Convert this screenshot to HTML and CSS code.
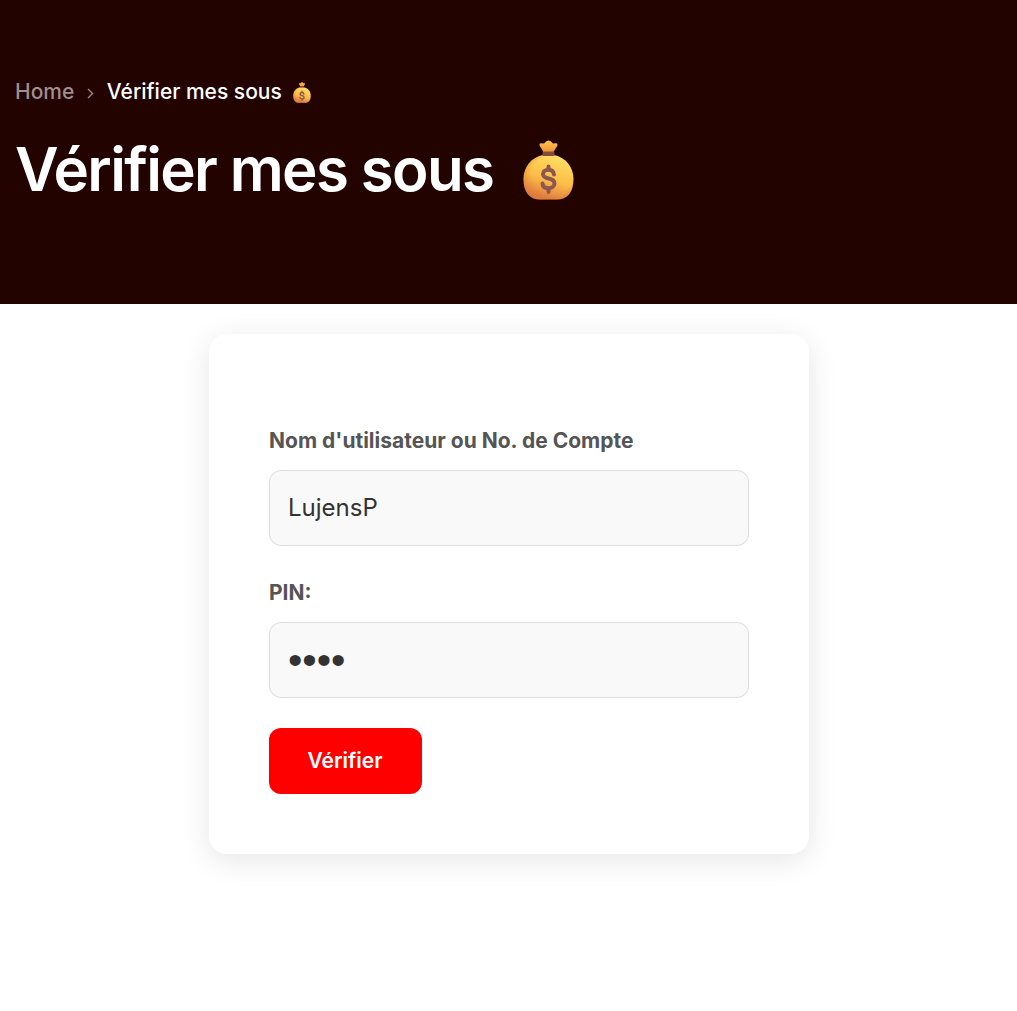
FILE: index.html
```html
<!DOCTYPE html>
<html lang="fr">
<head>
<meta charset="utf-8">
<title>Vérifier mes sous</title>
<link rel="stylesheet" href="styles.css">
</head>
<body>
<svg class="defs" width="0" height="0" aria-hidden="true">
  <defs>
    <linearGradient id="gold" x1="0.8" y1="0.1" x2="0.5" y2="1">
      <stop offset="0" stop-color="#ffdc60"/>
      <stop offset="0.55" stop-color="#fcbd48"/>
      <stop offset="1" stop-color="#e27c40"/>
    </linearGradient>
    <radialGradient id="shade" cx="0.58" cy="0.45" r="0.65">
      <stop offset="0.65" stop-color="#d87b38" stop-opacity="0"/>
      <stop offset="1" stop-color="#d87b38" stop-opacity="0.6"/>
    </radialGradient>
    <linearGradient id="top" x1="0" y1="0" x2="0" y2="1">
      <stop offset="0" stop-color="#ffc84b"/>
      <stop offset="1" stop-color="#f19334"/>
    </linearGradient>
    <symbol id="moneybag" viewBox="0 0 50 60">
      <path d="M20 12 16.300 6Q15.300 3.400 17.500 3.300L20.500 3.600Q23 0.500 25 0.500Q27 0.500 29.500 3.600L32.500 3.300Q34.700 3.400 33.700 6L30 12Z" fill="url(#top)"/>
      <path d="M20 15H30C42 17 50 27 50 39C50 52 44 59.500 33 59.500H17C6 59.500 0 52 0 39C0 27 8 17 20 15Z" fill="url(#gold)"/>
      <path d="M20 15H30C42 17 50 27 50 39C50 52 44 59.500 33 59.500H17C6 59.500 0 52 0 39C0 27 8 17 20 15Z" fill="url(#shade)"/>
      <rect x="19" y="11.500" width="12" height="4.500" rx="1.500" fill="#854c3c"/>
      <path d="M30.500 34.500C30 31 28 29.800 25 29.800C22 29.800 19.500 31.500 19.500 34C19.500 40.500 31 36.500 31 43.500C31 46.500 28 48.200 25 48.200C22 48.200 19.300 46.700 19 43.500M25 26.500V29.500M25 48.500V52" fill="none" stroke="#8e5651" stroke-width="4" stroke-linecap="round"/>
    </symbol>
  </defs>
</svg>
<header class="hero">
  <nav class="breadcrumb">
    <a class="home">Home</a>
    <svg class="chevron" viewBox="0 0 7 11"><path d="M1 1 5.500 5.500 1 10"/></svg>
    <span class="current">Vérifier mes sous</span>
    <svg class="bag-small"><use href="#moneybag"/></svg>
  </nav>
  <h1 class="title"><span>Vérifier mes sous</span><svg class="bag-large"><use href="#moneybag"/></svg></h1>
</header>
<main>
  <form class="card">
    <label class="label" for="user">Nom d'utilisateur ou No. de Compte</label>
    <input class="field" id="user" type="text" value="LujensP">
    <label class="label" for="pin">PIN:</label>
    <input class="field pin" id="pin" type="password" value="1234">
    <button class="submit" type="button">Vérifier</button>
  </form>
</main>
</body>
</html>
```
FILE: styles.css
```css
* { box-sizing: border-box; }
body { margin: 0; background: #fff; font-family: Inter, sans-serif; min-height: 1011px; }
.defs { display: block; }
.hero { height: 304px; padding: 75px 15px 0; background: #230300; color: #fff; }
.breadcrumb { display: flex; align-items: center; height: 32px; font-size: 21px; font-weight: 500; white-space: nowrap; }
.home { color: #a08f8e; }
.chevron { width: 7px; height: 11px; margin: 5px 13px 0; fill: none; stroke: #9a8786; stroke-width: 1.4; }
.current { margin-left: -0.5px; }
.bag-small { width: 18px; height: 21px; margin: 2px 0 0 11px; }
.title { display: flex; align-items: center; height: 72px; margin: 26px 0 0; font-size: 60px; font-weight: 600; letter-spacing: -1.65px; white-space: nowrap; }
.bag-large { width: 51px; height: 60px; margin: 2px 0 0 30px; }
.card { width: 600px; height: 520px; margin: 30px 0 0 209px; padding: 90px 60px 60px; border-radius: 18px; background: #fff; box-shadow: 0 6px 30px rgba(0, 0, 0, .1); }
.label { display: block; height: 34px; margin-bottom: 12px; font-size: 21px; line-height: 34px; font-weight: 700; color: #555; }
.field { display: block; width: 480px; height: 76px; margin: 0 0 30px; padding: 0 18px 2px; border: 1px solid #ddd; border-radius: 12px; outline: 0; background: #f9f9f9; color: #333; font: 400 24px Inter, sans-serif; }
.pin { padding-bottom: 0; font: 41px "Liberation Sans", sans-serif; }
.submit { display: block; width: 153px; height: 66px; padding: 0 1px 2px 0; border: 0; border-radius: 12px; background: #f00; color: #fff; font: 600 21px Inter, sans-serif; }
```
